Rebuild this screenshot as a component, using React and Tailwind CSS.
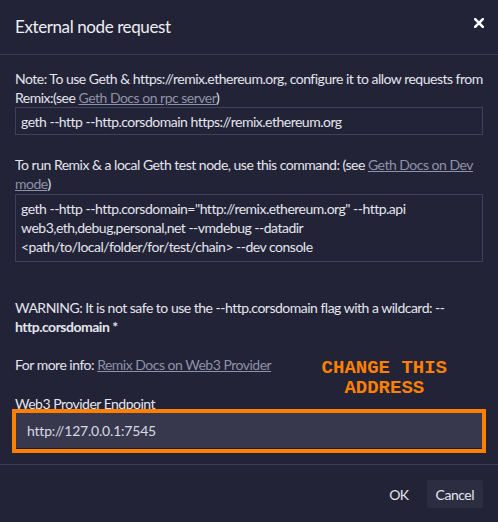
import React from 'react';

const CloseIcon = () => (
  <svg width="10" height="10" viewBox="0 0 10 10" className="block">
    <path d="M1.2 1.2 L8.8 8.8 M8.8 1.2 L1.2 8.8" stroke="#ffffff" strokeWidth="2.6" strokeLinecap="square" />
  </svg>
);

const App = () => {
  return (
    <div className="w-[498px] h-[522px] bg-[#222336] text-[#e4e5ee] text-[14px] leading-[19px] tracking-[-0.5px] overflow-hidden font-['Lato',_sans-serif]">
      {/* Header */}
      <div className="h-[55px] flex items-center justify-between px-[15px] border-b border-[#3c3d52]">
        <h2 className="text-[17px] tracking-[-0.4px] font-normal text-[#eeeef4] -mt-[2px]">External node request</h2>
        <button className="-mt-[9px] -mr-[1px]">
          <CloseIcon />
        </button>
      </div>

      {/* Body */}
      <div className="px-[15px] pt-[14px] flex flex-col">
        <p>
          Note: To use Geth &amp; https://remix.ethereum.org, configure it to allow requests from Remix:(see{' '}
          <a className="text-[#8e92a8] underline">Geth Docs on rpc server</a>)
        </p>
        <div className="h-[28px] flex items-center border border-[#404156] px-[5px]">
          geth --http --http.corsdomain https://remix.ethereum.org
        </div>

        <p className="mt-[20px]">
          To run Remix &amp; a local Geth test node, use this command: (see{' '}
          <a className="text-[#8e92a8] underline">Geth Docs on Dev mode</a>)
        </p>
        <div className="mt-[1px] border border-[#404156] px-[5px] pt-[4px] pb-[5px]">
          geth --http --http.corsdomain="http://remix.ethereum.org" --http.api web3,eth,debug,personal,net --vmdebug --datadir &lt;path/to/local/folder/for/test/chain&gt; --dev console
        </div>

        <p className="mt-[36px]">
          WARNING: It is not safe to use the --http.corsdomain flag with a wildcard: --
          <span className="font-bold">http.corsdomain *</span>
        </p>

        <div className="mt-[19px] flex items-start justify-between">
          <p>
            For more info: <a className="text-[#8e92a8] underline">Remix Docs on Web3 Provider</a>
          </p>
          <div className="mt-[3px] mr-[36px] text-center font-['Liberation_Mono',_monospace] font-bold tracking-normal text-[#ff8000] text-[19px] leading-[20px]">
            CHANGE THIS
            <br />
            ADDRESS
          </div>
        </div>

        <label className="-mt-[4px] block">Web3 Provider Endpoint</label>
        <div className="-mt-[4px] -mx-[3px] border-[4px] border-[#ff8000]">
          <input
            className="w-full h-[36px] bg-[#37384d] border-b border-[#1c1d2c] px-[11px] text-[#d8d9e3] text-[14px] tracking-[-0.2px] outline-none"
            defaultValue="http://127.0.0.1:7545"
          />
        </div>
      </div>

      {/* Footer */}
      <div className="mt-[11px] border-t border-[#3c3d52] flex justify-end items-center gap-[8px] px-[15px] pt-[15px]">
        <button className="h-[28px] px-[10px] text-[#e4e5ee] text-[14px]">OK</button>
        <button className="h-[28px] px-[9px] rounded-[2px] bg-[#2c2d41] text-[#e4e5ee] text-[14px]">Cancel</button>
      </div>
    </div>
  );
};

export default App;
